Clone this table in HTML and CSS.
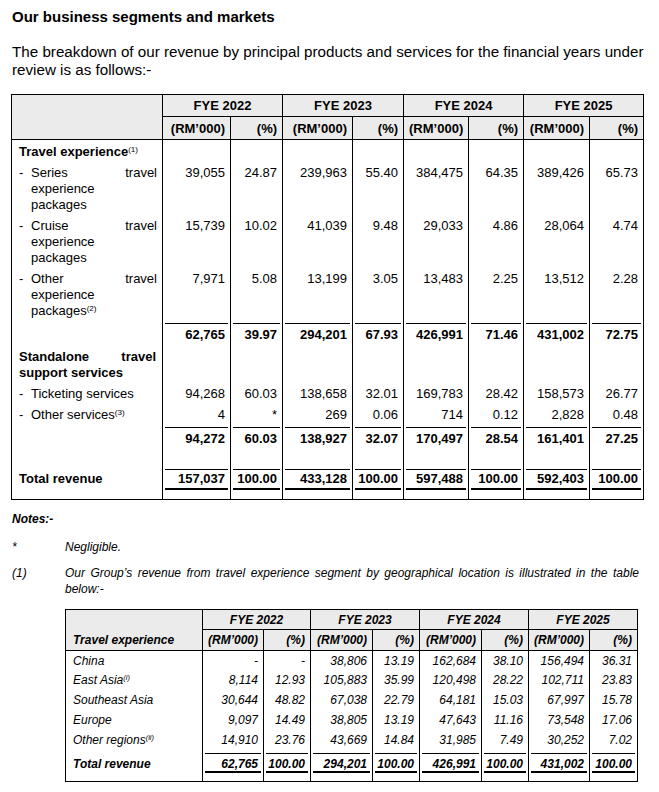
FILE: index.html
```html
<!DOCTYPE html>
<html lang="en">
<head>
<meta charset="utf-8">
<title>Our business segments and markets</title>
<link rel="stylesheet" href="styles.css">
</head>
<body>
<div class="page">
  <h1 class="title">Our business segments and markets</h1>
  <p class="intro">The breakdown of our revenue by principal products and services for the financial years under review is as follows:-</p>

  <table class="rev">
    <colgroup>
      <col class="c-label"><col class="c-a1"><col class="c-b1"><col class="c-a2"><col class="c-b2"><col class="c-a3"><col class="c-b3"><col class="c-a4"><col class="c-b4">
    </colgroup>
    <thead>
      <tr class="h1">
        <th rowspan="2"></th>
        <th colspan="2">FYE 2022</th>
        <th colspan="2">FYE 2023</th>
        <th colspan="2">FYE 2024</th>
        <th colspan="2">FYE 2025</th>
      </tr>
      <tr class="h2">
        <th>(RM’000)</th><th>(%)</th>
        <th>(RM’000)</th><th>(%)</th>
        <th>(RM’000)</th><th>(%)</th>
        <th>(RM’000)</th><th>(%)</th>
      </tr>
    </thead>
    <tbody>
      <tr>
        <td class="lbl b">Travel experience<sup>(1)</sup></td>
        <td></td><td></td><td></td><td></td><td></td><td></td><td></td><td></td>
      </tr>
      <tr class="item">
        <td class="lbl"><div class="dash"><span class="d">-</span><span class="jt">Series travel experience<br>packages</span></div></td>
        <td class="n">39,055</td><td class="n">24.87</td><td class="n">239,963</td><td class="n">55.40</td><td class="n">384,475</td><td class="n">64.35</td><td class="n">389,426</td><td class="n">65.73</td>
      </tr>
      <tr class="item">
        <td class="lbl"><div class="dash"><span class="d">-</span><span class="jt">Cruise travel experience<br>packages</span></div></td>
        <td class="n">15,739</td><td class="n">10.02</td><td class="n">41,039</td><td class="n">9.48</td><td class="n">29,033</td><td class="n">4.86</td><td class="n">28,064</td><td class="n">4.74</td>
      </tr>
      <tr class="item">
        <td class="lbl"><div class="dash"><span class="d">-</span><span class="jt">Other travel experience<br>packages<sup>(2)</sup></span></div></td>
        <td class="n">7,971</td><td class="n">5.08</td><td class="n">13,199</td><td class="n">3.05</td><td class="n">13,483</td><td class="n">2.25</td><td class="n">13,512</td><td class="n">2.28</td>
      </tr>
      <tr class="sub">
        <td></td>
        <td class="n r">62,765</td><td class="n r">39.97</td><td class="n r">294,201</td><td class="n r">67.93</td><td class="n r">426,991</td><td class="n r">71.46</td><td class="n r">431,002</td><td class="n r">72.75</td>
      </tr>
      <tr class="group">
        <td class="lbl b"><span class="jt">Standalone travel support services</span></td>
        <td></td><td></td><td></td><td></td><td></td><td></td><td></td><td></td>
      </tr>
      <tr>
        <td class="lbl"><div class="dash"><span class="d">-</span><span>Ticketing services</span></div></td>
        <td class="n">94,268</td><td class="n">60.03</td><td class="n">138,658</td><td class="n">32.01</td><td class="n">169,783</td><td class="n">28.42</td><td class="n">158,573</td><td class="n">26.77</td>
      </tr>
      <tr>
        <td class="lbl"><div class="dash"><span class="d">-</span><span>Other services<sup>(3)</sup></span></div></td>
        <td class="n">4</td><td class="n">*</td><td class="n">269</td><td class="n">0.06</td><td class="n">714</td><td class="n">0.12</td><td class="n">2,828</td><td class="n">0.48</td>
      </tr>
      <tr class="sub">
        <td></td>
        <td class="n r">94,272</td><td class="n r">60.03</td><td class="n r">138,927</td><td class="n r">32.07</td><td class="n r">170,497</td><td class="n r">28.54</td><td class="n r">161,401</td><td class="n r">27.25</td>
      </tr>
      <tr class="gap">
        <td></td><td></td><td></td><td></td><td></td><td></td><td></td><td></td><td></td>
      </tr>
      <tr class="total">
        <td class="lbl b">Total revenue</td>
        <td class="n rr">157,037</td><td class="n rr">100.00</td><td class="n rr">433,128</td><td class="n rr">100.00</td><td class="n rr">597,488</td><td class="n rr">100.00</td><td class="n rr">592,403</td><td class="n rr">100.00</td>
      </tr>
    </tbody>
  </table>

  <div class="notes">
    <div class="notes-title">Notes:-</div>
    <div class="note first">
      <span class="mark">*</span>
      <span class="ntext">Negligible.</span>
    </div>
    <div class="note">
      <span class="mark">(1)</span>
      <span class="ntext just">Our Group’s revenue from travel experience segment by geographical location is illustrated in the table below:-</span>
    </div>
  </div>

  <table class="geo">
    <colgroup>
      <col class="g-label"><col class="g-a2"><col class="g-b"><col class="g-a"><col class="g-b"><col class="g-a"><col class="g-b"><col class="g-a2"><col class="g-b2">
    </colgroup>
    <thead>
      <tr class="h1">
        <th rowspan="2" class="lbl">Travel experience</th>
        <th colspan="2">FYE 2022</th>
        <th colspan="2">FYE 2023</th>
        <th colspan="2">FYE 2024</th>
        <th colspan="2">FYE 2025</th>
      </tr>
      <tr class="h2">
        <th>(RM’000)</th><th>(%)</th>
        <th>(RM’000)</th><th>(%)</th>
        <th>(RM’000)</th><th>(%)</th>
        <th>(RM’000)</th><th>(%)</th>
      </tr>
    </thead>
    <tbody>
      <tr>
        <td class="lbl">China</td>
        <td class="n">-</td><td class="n">-</td><td class="n">38,806</td><td class="n">13.19</td><td class="n">162,684</td><td class="n">38.10</td><td class="n">156,494</td><td class="n">36.31</td>
      </tr>
      <tr>
        <td class="lbl">East Asia<sup>(i)</sup></td>
        <td class="n">8,114</td><td class="n">12.93</td><td class="n">105,883</td><td class="n">35.99</td><td class="n">120,498</td><td class="n">28.22</td><td class="n">102,711</td><td class="n">23.83</td>
      </tr>
      <tr>
        <td class="lbl">Southeast Asia</td>
        <td class="n">30,644</td><td class="n">48.82</td><td class="n">67,038</td><td class="n">22.79</td><td class="n">64,181</td><td class="n">15.03</td><td class="n">67,997</td><td class="n">15.78</td>
      </tr>
      <tr>
        <td class="lbl">Europe</td>
        <td class="n">9,097</td><td class="n">14.49</td><td class="n">38,805</td><td class="n">13.19</td><td class="n">47,643</td><td class="n">11.16</td><td class="n">73,548</td><td class="n">17.06</td>
      </tr>
      <tr>
        <td class="lbl">Other regions<sup>(ii)</sup></td>
        <td class="n">14,910</td><td class="n">23.76</td><td class="n">43,669</td><td class="n">14.84</td><td class="n">31,985</td><td class="n">7.49</td><td class="n">30,252</td><td class="n">7.02</td>
      </tr>
      <tr class="total">
        <td class="lbl b">Total revenue</td>
        <td class="n rr">62,765</td><td class="n rr">100.00</td><td class="n rr">294,201</td><td class="n rr">100.00</td><td class="n rr">426,991</td><td class="n rr">100.00</td><td class="n rr">431,002</td><td class="n rr">100.00</td>
      </tr>
    </tbody>
  </table>
</div>
</body>
</html>
```

FILE: styles.css
```css
* { box-sizing: border-box; }

html, body {
  margin: 0;
  padding: 0;
  background: #fff;
}

body {
  font-family: "Liberation Sans", Arial, sans-serif;
  color: #000;
}

.page {
  padding: 8px 0 0 12px;
  width: 659px;
}

.title {
  font-size: 15px;
  font-weight: bold;
  line-height: 17px;
  margin: 0;
}

.intro {
  font-size: 15.2px;
  line-height: 17.5px;
  margin: 18px 0 0 0;
  width: 640px;
}

/* ---------- revenue table ---------- */
.rev {
  margin: 16px 0 0 -1px;
  width: 632px;
  table-layout: fixed;
  border-collapse: collapse;
  font-size: 13px;
  border: 1px solid #000;
}

.c-label { width: 151px; }
.c-a1 { width: 68px; }
.c-b1 { width: 52px; }
.c-a2 { width: 70px; }
.c-b2 { width: 51px; }
.c-a3 { width: 65px; }
.c-b3 { width: 55px; }
.c-a4 { width: 66px; }
.c-b4 { width: 54px; }

.rev th,
.geo th {
  background: #ebebeb;
  border: 1px solid #000;
  font-weight: bold;
  padding: 0 5px;
}

.rev .h1 th { height: 22px; text-align: center; }
.rev .h2 th { height: 23px; text-align: right; }

.rev td {
  border-left: 1px solid #000;
  border-right: 1px solid #000;
  padding: 4px 5px 1px 7px;
  line-height: 16px;
  vertical-align: top;
}

.rev td.n {
  text-align: right;
  padding-right: 5px;
  padding-left: 2px;
}

.b { font-weight: bold; }

.lbl { text-align: left; }

sup {
  font-size: 0.62em;
  line-height: 0;
  vertical-align: 0.55em;
  font-weight: normal;
}

.dash {
  display: flex;
}

.dash .d {
  flex: 0 0 12px;
}

.jt {
  display: block;
  flex: 1;
  text-align: justify;
}

.rev .sub td { padding-top: 7px; padding-bottom: 1px; font-weight: bold; }
.rev .group td { padding-top: 5px; padding-bottom: 1px; }
.rev .group .jt { padding-right: 1px; }

.rev .gap td { height: 17px; padding: 0; }

.r {
  background-image: linear-gradient(#000, #000);
  background-repeat: no-repeat;
  background-size: calc(100% - 4px) 1px;
  background-position: 2px 3px;
}

.rev .total td {
  padding-top: 6px;
  padding-bottom: 12px;
  font-weight: bold;
}

.rr {
  background-image: linear-gradient(#000, #000), linear-gradient(#000, #000);
  background-repeat: no-repeat, no-repeat;
  background-size: calc(100% - 4px) 1px, calc(100% - 4px) 2px;
  background-position: 2px 4px, 2px 23px;
}

/* ---------- notes ---------- */
.notes {
  font-size: 12px;
  font-style: italic;
  line-height: 16px;
  margin-top: 11px;
  width: 627px;
}

.notes-title {
  font-weight: bold;
}

.note {
  display: grid;
  grid-template-columns: 53px 1fr;
  margin-top: 10px;
}

.note.first { margin-top: 12px; }

.ntext.just { text-align: justify; }

/* ---------- geography table ---------- */
.geo {
  margin: 12px 0 0 53px;
  width: 572px;
  table-layout: fixed;
  border-collapse: collapse;
  font-size: 12px;
  font-style: italic;
  border: 1px solid #000;
}

.g-label { width: 137px; }
.g-a { width: 62px; }
.g-b { width: 47px; }
.g-a2 { width: 61px; }
.g-b2 { width: 48px; }

.geo .h1 th { height: 20px; text-align: center; }
.geo .h2 th { height: 21px; text-align: right; }
.geo th.lbl { text-align: left; vertical-align: bottom; padding: 0 7px 3px; }

.geo td {
  border-left: 1px solid #000;
  border-right: 1px solid #000;
  padding: 2px 5px 1px 7px;
  line-height: 16px;
  height: 19.8px;
  vertical-align: top;
}

.geo td.n { text-align: right; padding-left: 2px; padding-right: 5px; }

.geo .total td {
  padding-top: 7px;
  padding-bottom: 9px;
  height: 32px;
  font-weight: bold;
}

.geo .rr {
  background-position: 2px 4px, 2px 22px;
}
```
